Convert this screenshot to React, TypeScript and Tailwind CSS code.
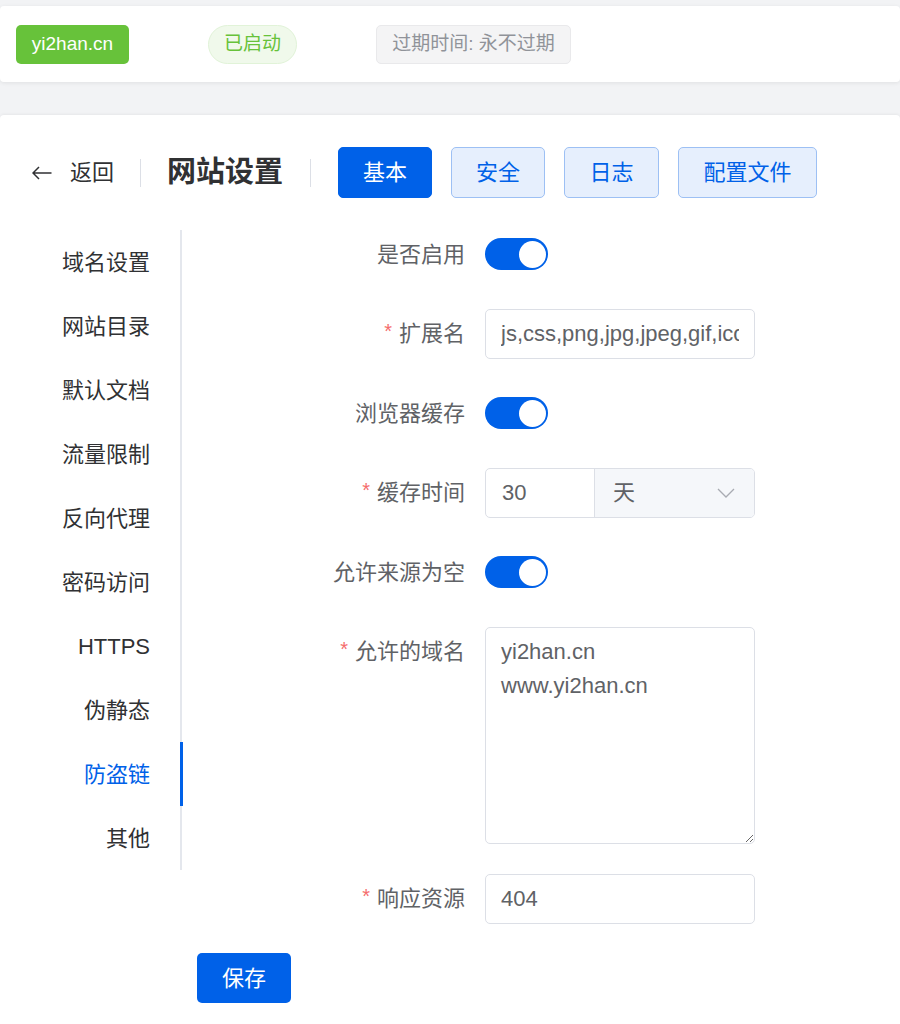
import React from "react";

const FONT = '"Liberation Sans", "Noto Sans CJK SC", sans-serif';

function Toggle() {
  return (
    <div className="w-[63px] h-[32px] rounded-full bg-[#0061e8] flex items-center justify-end pr-[2px]">
      <div className="w-[27px] h-[27px] rounded-full bg-white" />
    </div>
  );
}

function FormItem({
  label,
  required,
  children,
}: {
  label: string;
  required?: boolean;
  children: React.ReactNode;
}) {
  return (
    <div className="flex mb-[29.6px]">
      <div className="w-[288px] shrink-0 pr-[20px] flex justify-end items-center h-[50px] text-[22px] text-[#606266]">
        {required && <span className="text-[#f56c6c] mr-[7px] text-[20px] -mt-[6px]">*</span>}
        <span>{label}</span>
      </div>
      <div className="flex items-center min-h-[50px]">{children}</div>
    </div>
  );
}

const sideItems = [
  "域名设置",
  "网站目录",
  "默认文档",
  "流量限制",
  "反向代理",
  "密码访问",
  "HTTPS",
  "伪静态",
  "防盗链",
  "其他",
];

export default function App() {
  return (
    <div className="min-h-screen bg-[#f2f3f5] pt-[6px]" style={{ fontFamily: FONT }}>
      {/* top card */}
      <div className="h-[76px] bg-white rounded-[4px] shadow-[0_1px_4px_rgba(0,0,0,0.08)] flex items-center pl-[16px] gap-[79px]">
        <div className="h-[39px] w-[113px] rounded-[5px] bg-[#67c23a] text-white text-[19px] flex items-center justify-center">
          yi2han.cn
        </div>
        <div className="h-[39px] w-[89px] rounded-full bg-[#f0f9eb] border border-[#e1f3d8] text-[#67c23a] text-[19px] flex items-center justify-center">
          已启动
        </div>
        <div className="h-[39px] w-[195px] rounded-[5px] bg-[#f4f4f5] border border-[#e9e9eb] text-[#909399] text-[19px] flex items-center justify-center">
          过期时间: 永不过期
        </div>
      </div>

      {/* main white section */}
      <div className="mt-[33px] bg-white rounded-t-[4px] shadow-[0_-1px_3px_rgba(0,0,0,0.05)] pt-[32px] min-h-[909px]">
        {/* header */}
        <div className="flex items-center h-[51px] pl-[32px]">
          <svg width="20" height="14" viewBox="0 0 20 14" className="shrink-0">
            <path d="M19.5 7H1M7 1L1 7L7 13" fill="none" stroke="#303133" strokeWidth="1.5" />
          </svg>
          <span className="ml-[18px] text-[22px] text-[#303133]">返回</span>
          <div className="ml-[26px] w-px h-[28px] bg-[#dcdfe6]" />
          <span className="ml-[26px] text-[29px] font-bold text-[#303133]">网站设置</span>
          <div className="ml-[27px] w-px h-[28px] bg-[#dcdfe6]" />
          <div className="ml-[27px] flex gap-[19px]">
            <button className="w-[94px] h-[51px] rounded-[5px] bg-[#0061e8] border border-[#0061e8] text-white text-[22px]">
              基本
            </button>
            <button className="w-[94px] h-[51px] rounded-[5px] bg-[#e6effd] border border-[#9dc0f4] text-[#0061e8] text-[22px]">
              安全
            </button>
            <button className="w-[95px] h-[51px] rounded-[5px] bg-[#e6effd] border border-[#9dc0f4] text-[#0061e8] text-[22px]">
              日志
            </button>
            <button className="w-[139px] h-[51px] rounded-[5px] bg-[#e6effd] border border-[#9dc0f4] text-[#0061e8] text-[22px]">
              配置文件
            </button>
          </div>
        </div>

        {/* body */}
        <div className="flex mt-[31px]">
          <div className="w-[182px] shrink-0 self-start border-r-2 border-[#e4e7ed] mt-[1px]">
            {sideItems.map((it) => {
              const active = it === "防盗链";
              return (
                <div
                  key={it}
                  className={
                    "relative h-[64px] flex items-center justify-end pr-[30px] text-[22px] " +
                    (active ? "text-[#0061e8]" : "text-[#303133]")
                  }
                >
                  {it}
                  {active && (
                    <div className="absolute right-[-3px] top-0 bottom-0 w-[3px] bg-[#0061e8]" />
                  )}
                </div>
              );
            })}
          </div>

          <div className="ml-[15px] flex-1">
            <FormItem label="是否启用">
              <Toggle />
            </FormItem>
            <FormItem label="扩展名" required>
              <input
                readOnly
                value="js,css,png,jpg,jpeg,gif,ico,bmp,swf,eot,svg,ttf,woff,woff2"
                className="w-[270px] h-[50px] border border-[#dcdfe6] rounded-[5px] px-[15px] text-[22px] text-[#606266] outline-none"
                style={{ fontFamily: FONT }}
              />
            </FormItem>
            <FormItem label="浏览器缓存">
              <Toggle />
            </FormItem>
            <FormItem label="缓存时间" required>
              <div className="w-[270px] h-[50px] border border-[#dcdfe6] rounded-[5px] flex overflow-hidden">
                <div className="w-[109px] border-r border-[#dcdfe6] flex items-center pl-[16px] text-[22px] text-[#606266]">
                  30
                </div>
                <div className="flex-1 bg-[#f5f7fa] flex items-center justify-between pl-[18px] pr-[19px] text-[22px] text-[#606266]">
                  <span>天</span>
                  <svg width="18" height="10" viewBox="0 0 18 10">
                    <path d="M1 1L9 9L17 1" fill="none" stroke="#a8abb2" strokeWidth="1.3" />
                  </svg>
                </div>
              </div>
            </FormItem>
            <FormItem label="允许来源为空">
              <Toggle />
            </FormItem>
            <FormItem label="允许的域名" required>
              <textarea
                readOnly
                value={"yi2han.cn\nwww.yi2han.cn"}
                className="w-[270px] h-[217px] border border-[#dcdfe6] rounded-[5px] px-[15px] py-[7px] text-[22px] leading-[34px] text-[#606266] outline-none block"
                style={{ fontFamily: FONT }}
              />
            </FormItem>
            <FormItem label="响应资源" required>
              <input
                readOnly
                value="404"
                className="w-[270px] h-[50px] border border-[#dcdfe6] rounded-[5px] px-[15px] text-[22px] text-[#606266] outline-none"
                style={{ fontFamily: FONT }}
              />
            </FormItem>
            <button className="w-[94px] h-[50px] rounded-[5px] bg-[#0061e8] text-white text-[22px]">
              保存
            </button>
          </div>
        </div>
      </div>
    </div>
  );
}
